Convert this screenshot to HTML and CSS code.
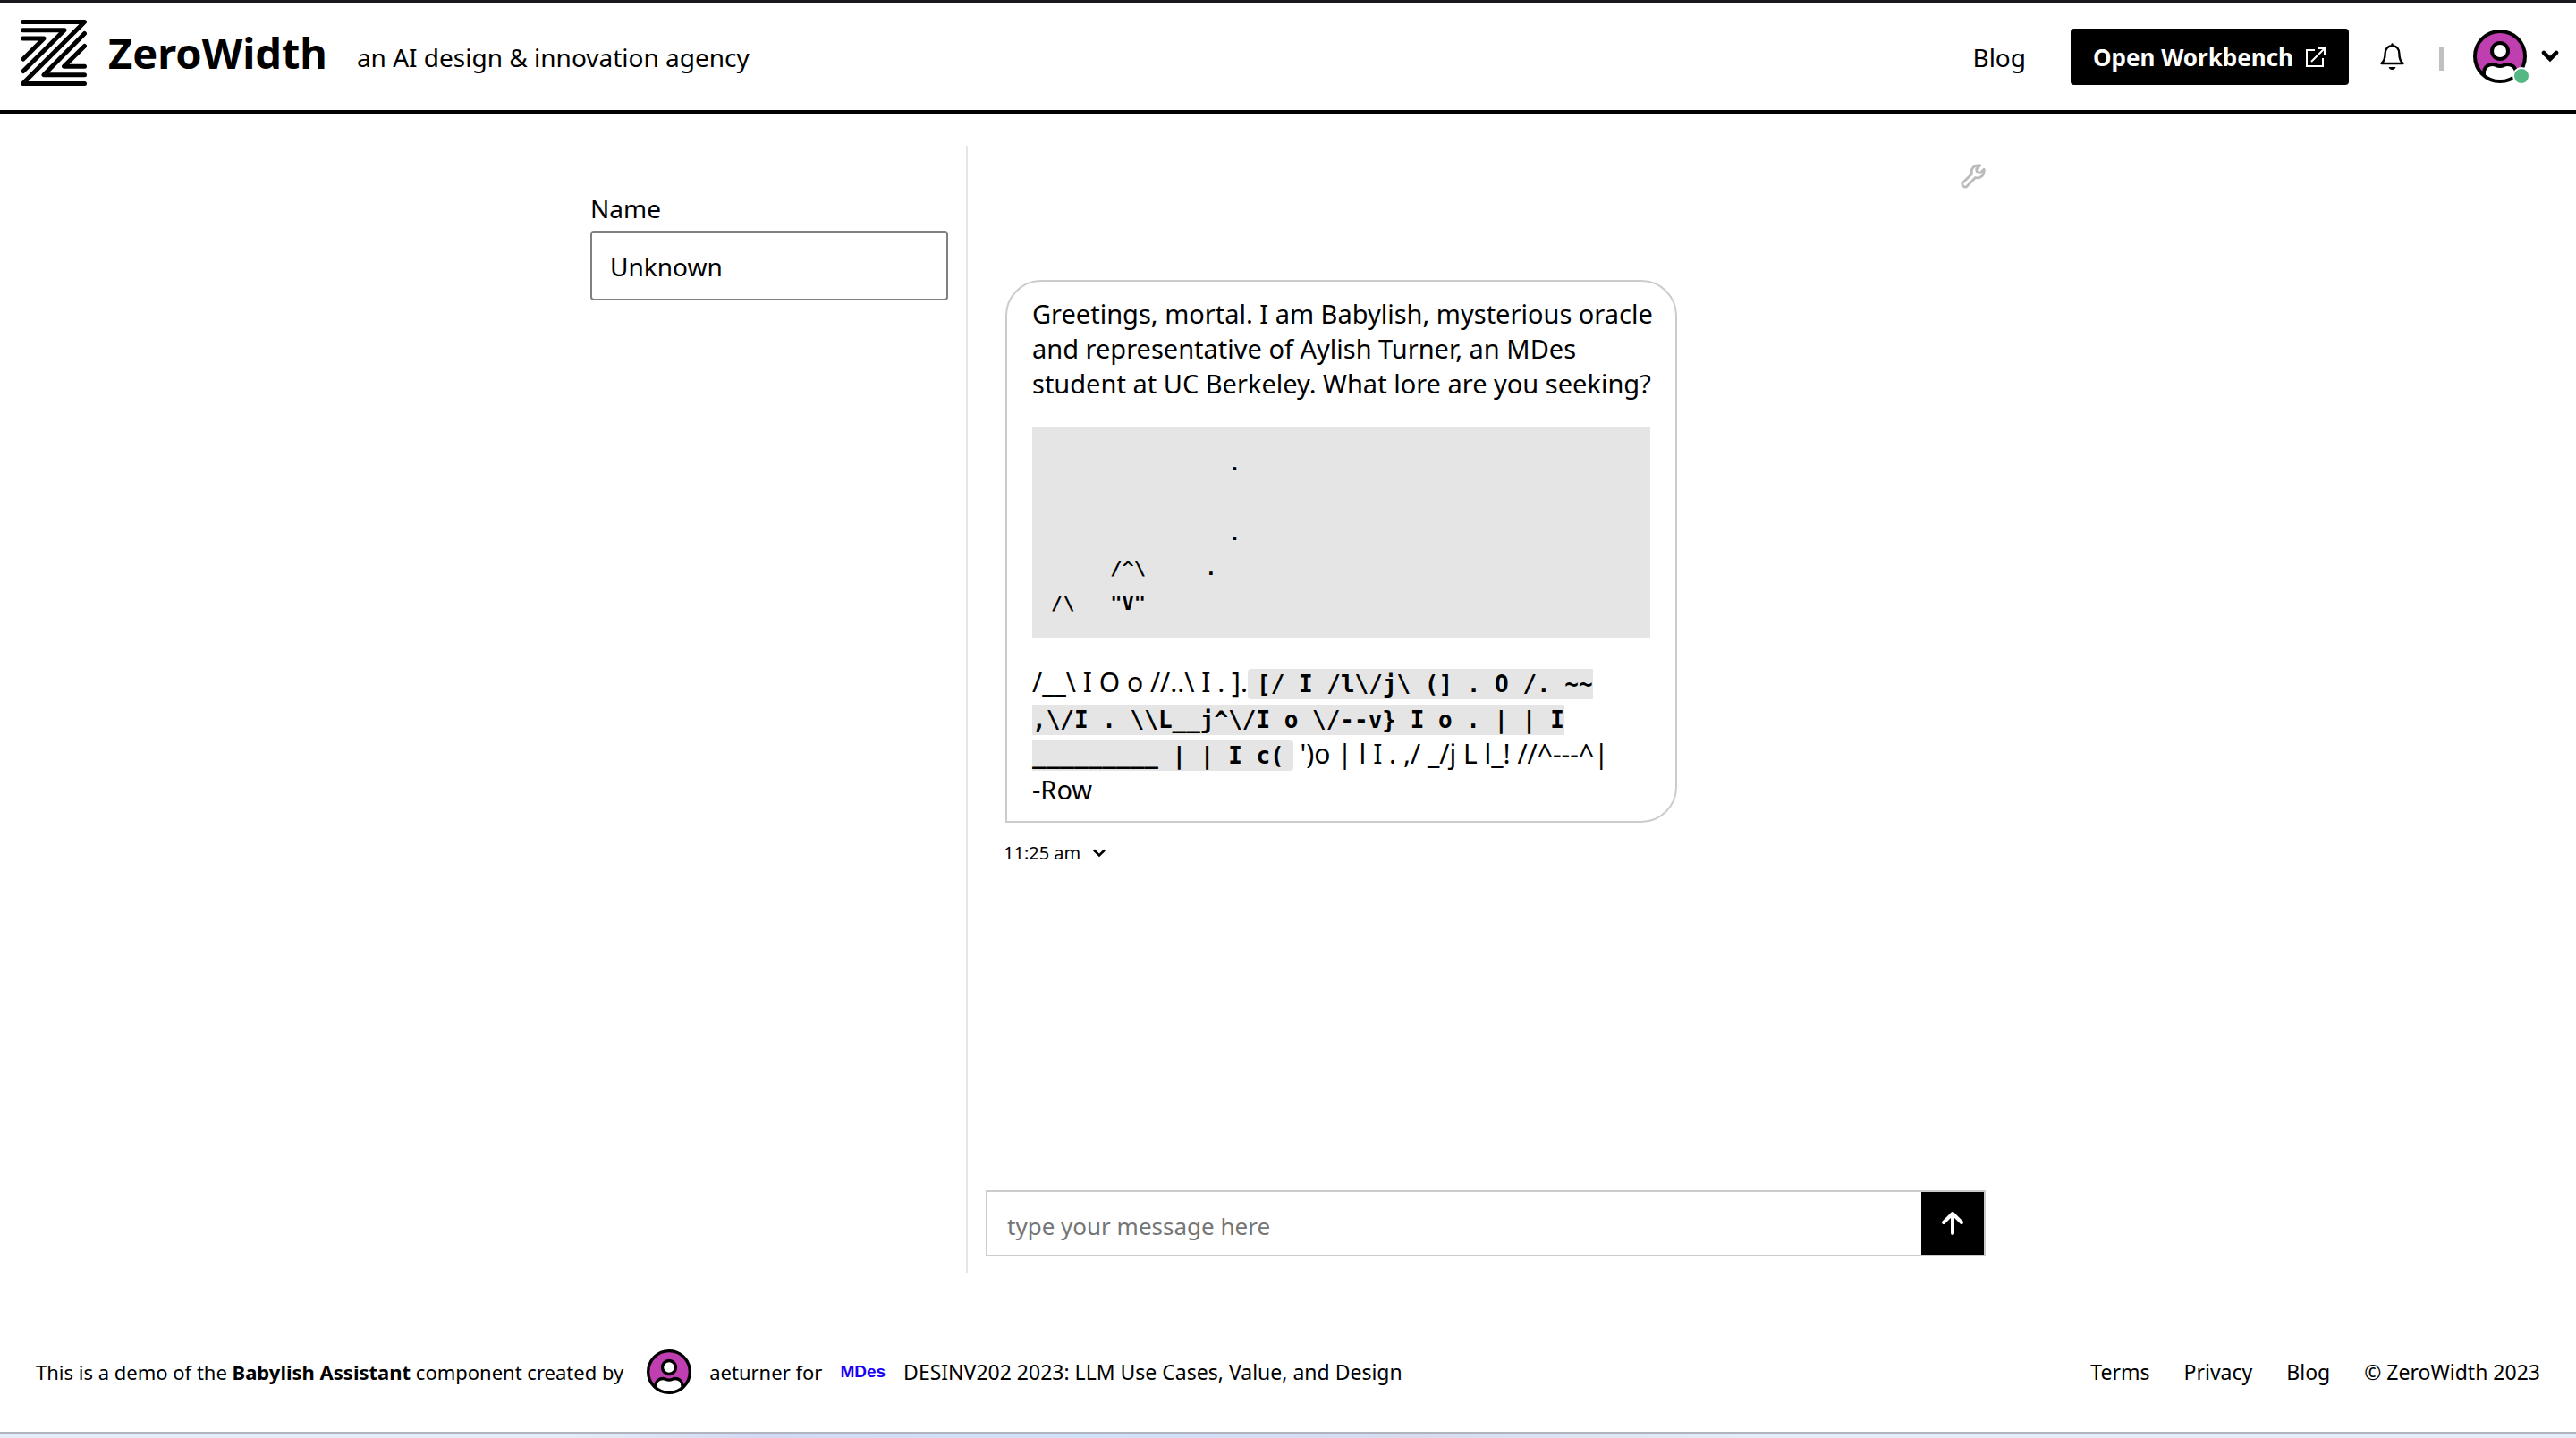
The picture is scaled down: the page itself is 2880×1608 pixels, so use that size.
FILE: index.html
```html
<!DOCTYPE html>
<html lang="en">
<head>
<meta charset="utf-8">
<meta name="viewport" content="width=device-width, initial-scale=1">
<title>Babylish Assistant | ZeroWidth</title>
<link rel="stylesheet" href="styles.css">
</head>
<body>
<svg class="symbols" aria-hidden="true">
  <symbol id="avatar" viewBox="0 0 60 60">
    <clipPath id="avatar-clip"><circle cx="30" cy="30" r="28"/></clipPath>
    <circle cx="30" cy="30" r="29" fill="#bf3fb0"/>
    <path clip-path="url(#avatar-clip)" d="M12 52V49C12 42 17 39 22 39C25 39 26 41 30 41C34 41 35 39 38 39C43 39 48 42 48 49V62H12Z" fill="#fff" stroke="#000" stroke-width="4"/>
    <circle cx="30" cy="24" r="9" fill="#fff" stroke="#000" stroke-width="4"/>
    <circle cx="30" cy="30" r="28" fill="none" stroke="#000" stroke-width="4"/>
  </symbol>
</svg>

<header class="site-header">
  <a class="brand" href="#">
    <svg class="logo" viewBox="0 0 74 74" aria-hidden="true">
      <path d="M2.5 2.5H71.5L2.5 71.5H71.5M2.5 11.7H49L3 57.5M2.5 21H26L3 44M71.5 15.5L26 61.7H71.5M71.5 29.5L48.5 52.3H71.5"/>
    </svg>
    <span class="brand-name">ZeroWidth</span>
  </a>
  <span class="tagline">an AI design &amp; innovation agency</span>
  <nav class="header-nav">
    <a class="nav-link" href="#">Blog</a>
    <button class="workbench" type="button">
      Open Workbench
      <svg width="24" height="24" viewBox="0 0 24 24" fill="none" stroke="#fff" stroke-width="2" aria-hidden="true">
        <path d="M11 4H2V22H20V13M7 17L21 3"/><path d="M14 2H22V10"/>
      </svg>
    </button>
    <button class="icon-button bell" type="button" aria-label="Notifications">
      <svg width="27" height="31" viewBox="0 0 27 31" fill="none" stroke="#000" stroke-width="2.4" stroke-linecap="round" stroke-linejoin="round">
        <path d="M13.5 1.5V3M13.5 3.2C8.5 3.2 5.6 7 5.6 12C5.6 17.5 4.6 20.4 1.5 23H25.5C22.4 20.4 21.4 17.5 21.4 12C21.4 7 18.5 3.2 13.5 3.2Z"/>
        <path d="M9.5 27H17.5A4.2 4.2 0 0 1 9.5 27Z" fill="#000" stroke="none"/>
      </svg>
    </button>
    <span class="separator"></span>
    <button class="icon-button account" type="button" aria-label="Account">
      <span class="account-picture">
        <svg width="60" height="60"><use href="#avatar"/></svg>
        <span class="status"></span>
      </span>
      <svg width="20" height="14" viewBox="0 0 20 14" fill="none" stroke="#000" stroke-width="4.6" stroke-linecap="round"><path d="M3 3L10 10L17 3"/></svg>
    </button>
  </nav>
</header>

<main class="workspace">
  <aside class="sidebar">
    <label class="field-label" for="name">Name</label>
    <input class="field" id="name" type="text" value="Unknown">
  </aside>
  <section class="chat">
    <button class="icon-button settings" type="button" aria-label="Settings">
      <svg width="28" height="28" viewBox="0 0 28 28" fill="none" stroke="#bbb" stroke-width="2.8" stroke-linejoin="round">
        <path d="M12.5 11.5C11 5.5 15.5 .9 21.8 1.9L17.6 6L18.4 9.6L22 10.4L26.1 6.2C27.2 12.5 22.5 17 16.5 15.5L6.5 25.7A3.2 3.2 0 0 1 2.2 21.5Z"/>
      </svg>
    </button>
    <article class="message">
      <div class="bubble">
        <p class="greeting">Greetings, mortal. I am Babylish, mysterious oracle<br>and representative of Aylish Turner, an MDes<br>student at UC Berkeley. What lore are you seeking?</p>
<pre class="code-block">               .

               .
     /^\     .
/\   "V"</pre>
        <p class="runes">/__\ I O o //..\ I . ].<code>[/ I /l\/j\ (] . O /. ~~<br>,\/I . \\L__j^\/I o \/--v} I o . | | I<br>_________ | | I c(</code> ')o | l I . ,/ _/j L l_! //^---^|</p>
        <p class="signature">-Row</p>
      </div>
      <button class="timestamp" type="button">11:25 am
        <svg width="14" height="10" viewBox="0 0 14 10" fill="none" stroke="#000" stroke-width="2.6"><path d="M1 1.5L7 7.5L13 1.5"/></svg>
      </button>
    </article>
    <form class="composer">
      <input class="composer-input" type="text" placeholder="type your message here" aria-label="Message">
      <button class="send" type="button" aria-label="Send">
        <svg width="26" height="28" viewBox="0 0 26 28" fill="none" stroke="#fff" stroke-width="4" stroke-linecap="round" stroke-linejoin="round"><path d="M13 25V3M3 13L13 3L23 13"/></svg>
      </button>
    </form>
  </section>
</main>

<footer class="site-footer">
  <div class="credits">
    <span class="statement">This is a demo of the <strong>Babylish Assistant</strong> component created by</span>
    <svg width="50" height="50" aria-hidden="true"><use href="#avatar"/></svg>
    <span class="author">aeturner for</span>
    <span class="course-logo">MDes</span>
    <span>DESINV202 2023: LLM Use Cases, Value, and Design</span>
  </div>
  <nav class="footer-nav">
    <a href="#">Terms</a>
    <a href="#">Privacy</a>
    <a href="#">Blog</a>
    <span>© ZeroWidth 2023</span>
  </nav>
</footer>
<div class="window-edge"></div>
</body>
</html>
```
FILE: styles.css
```css
* { box-sizing: border-box; }

body {
  display: flex;
  flex-direction: column;
  min-height: 100vh;
  margin: 0;
  background: #fff;
  color: #000;
  font: 28px/39px "Noto Sans", "Open Sans", sans-serif;
}

a { color: inherit; text-decoration: none; }
p { margin: 0; }
svg { flex: none; display: block; }
button, input { margin: 0; font: inherit; color: inherit; }
.symbols { position: absolute; width: 0; height: 0; }

/* Header */
.site-header {
  display: flex;
  align-items: center;
  height: 127px;
  padding: 0 19px 0 23px;
  border-top: 3px solid #181820;
  border-bottom: 4px solid #000;
}
.brand { display: flex; align-items: center; gap: 24px; padding-bottom: 8px; }
.logo {
  width: 74px;
  height: 74px;
  fill: none;
  stroke: #000;
  stroke-width: 5;
  stroke-linecap: round;
  stroke-linejoin: round;
}
.brand-name { font-size: 47px; font-weight: bold; line-height: 64px; }
.tagline { margin-left: 33px; padding-top: 2px; }
.header-nav { display: flex; align-items: center; margin-left: auto; }
.nav-link { margin-right: 50px; padding-top: 2px; }
.workbench {
  display: flex;
  align-items: center;
  gap: 13px;
  height: 63px;
  padding: 2px 25px 0;
  border: 0;
  border-radius: 4px;
  background: #000;
  color: #fff;
  font-size: 26px;
  font-weight: bold;
  line-height: 36px;
}
.icon-button { padding: 0; border: 0; background: none; }
.bell { margin-left: 35px; }
.separator { width: 5px; height: 27px; margin: 4px 33px 0 39px; background: #c0c0c0; }
.account { display: flex; align-items: center; gap: 16px; }
.account-picture { position: relative; }
.status {
  position: absolute;
  right: -4px;
  bottom: -2px;
  width: 20px;
  height: 20px;
  border: 2px solid #fff;
  border-radius: 50%;
  background: #55b783;
}

/* Workspace */
.workspace {
  flex: 1;
  display: flex;
  width: 100%;
  max-width: 1560px;
  margin: 0 auto;
  padding: 36px 0;
}
.sidebar {
  flex: none;
  width: 422px;
  padding: 51px 20px 0 0;
  border-right: 2px solid #e5e5e5;
}
.field-label { display: block; margin-bottom: 5px; }
.field {
  width: 100%;
  height: 78px;
  padding: 2px 20px 0;
  border: 2px solid #808080;
  border-radius: 4px;
  background: #fff;
}
.chat {
  flex: 1;
  display: flex;
  flex-direction: column;
  padding: 20px 0 19px 20px;
}
.settings { align-self: flex-end; }
.message { flex: 1; padding: 102px 0 0 20px; }
.bubble {
  max-width: 751px;
  margin-left: 2px;
  padding: 16px 28px;
  border: 2px solid #ccc;
  border-radius: 40px 40px 40px 0;
}
.greeting { font-size: 29px; white-space: nowrap; }
.code-block {
  margin: 30px 0;
  padding: 21px 21px 19px;
  background: #e5e5e5;
  font: bold 22px/39px "DejaVu Sans Mono", "Liberation Mono", monospace;
}
.runes { font-size: 30px; line-height: 40px; }
.runes code {
  padding: 2px 10px;
  border-radius: 4px;
  background: #e5e5e5;
  font: bold 26px/26px "DejaVu Sans Mono", "Liberation Mono", monospace;
}
.signature { font-size: 29px; }
.timestamp {
  display: flex;
  align-items: center;
  gap: 14px;
  margin-top: 19px;
  padding: 0;
  border: 0;
  background: none;
  font-size: 20px;
  line-height: 30px;
}
.composer { display: flex; height: 74px; border: 2px solid #ccc; }
.composer-input {
  flex: 1;
  min-width: 0;
  padding: 6px 22px 0;
  border: 0;
  background: #fff;
  font-size: 26px;
}
.composer-input::placeholder { color: #757575; opacity: 1; }
.send {
  display: flex;
  align-items: center;
  justify-content: center;
  width: 70px;
  padding: 0;
  border: 0;
  background: #000;
}

/* Footer */
.site-footer {
  display: flex;
  align-items: center;
  justify-content: space-between;
  padding: 49px 40px 42px;
  font-size: 23px;
  line-height: 32px;
}
.credits { display: flex; align-items: center; gap: 20px; }
.statement { margin-right: 6px; font-size: 22px; }
.author { font-size: 22px; }
.course-logo { color: #1a00f5; font: bold 19px/32px "Liberation Sans", sans-serif; }
.footer-nav { display: flex; gap: 38px; }
.window-edge {
  height: 7px;
  border-top: 2px solid #b0b4c0;
  background: linear-gradient(90deg, #e3eef8 0%, #e3eef8 22%, #d3daf3 29%, #d0e2fa 42%, #d8dbf0 55%, #e3eef8 68%, #e3eef8 100%);
}
```
